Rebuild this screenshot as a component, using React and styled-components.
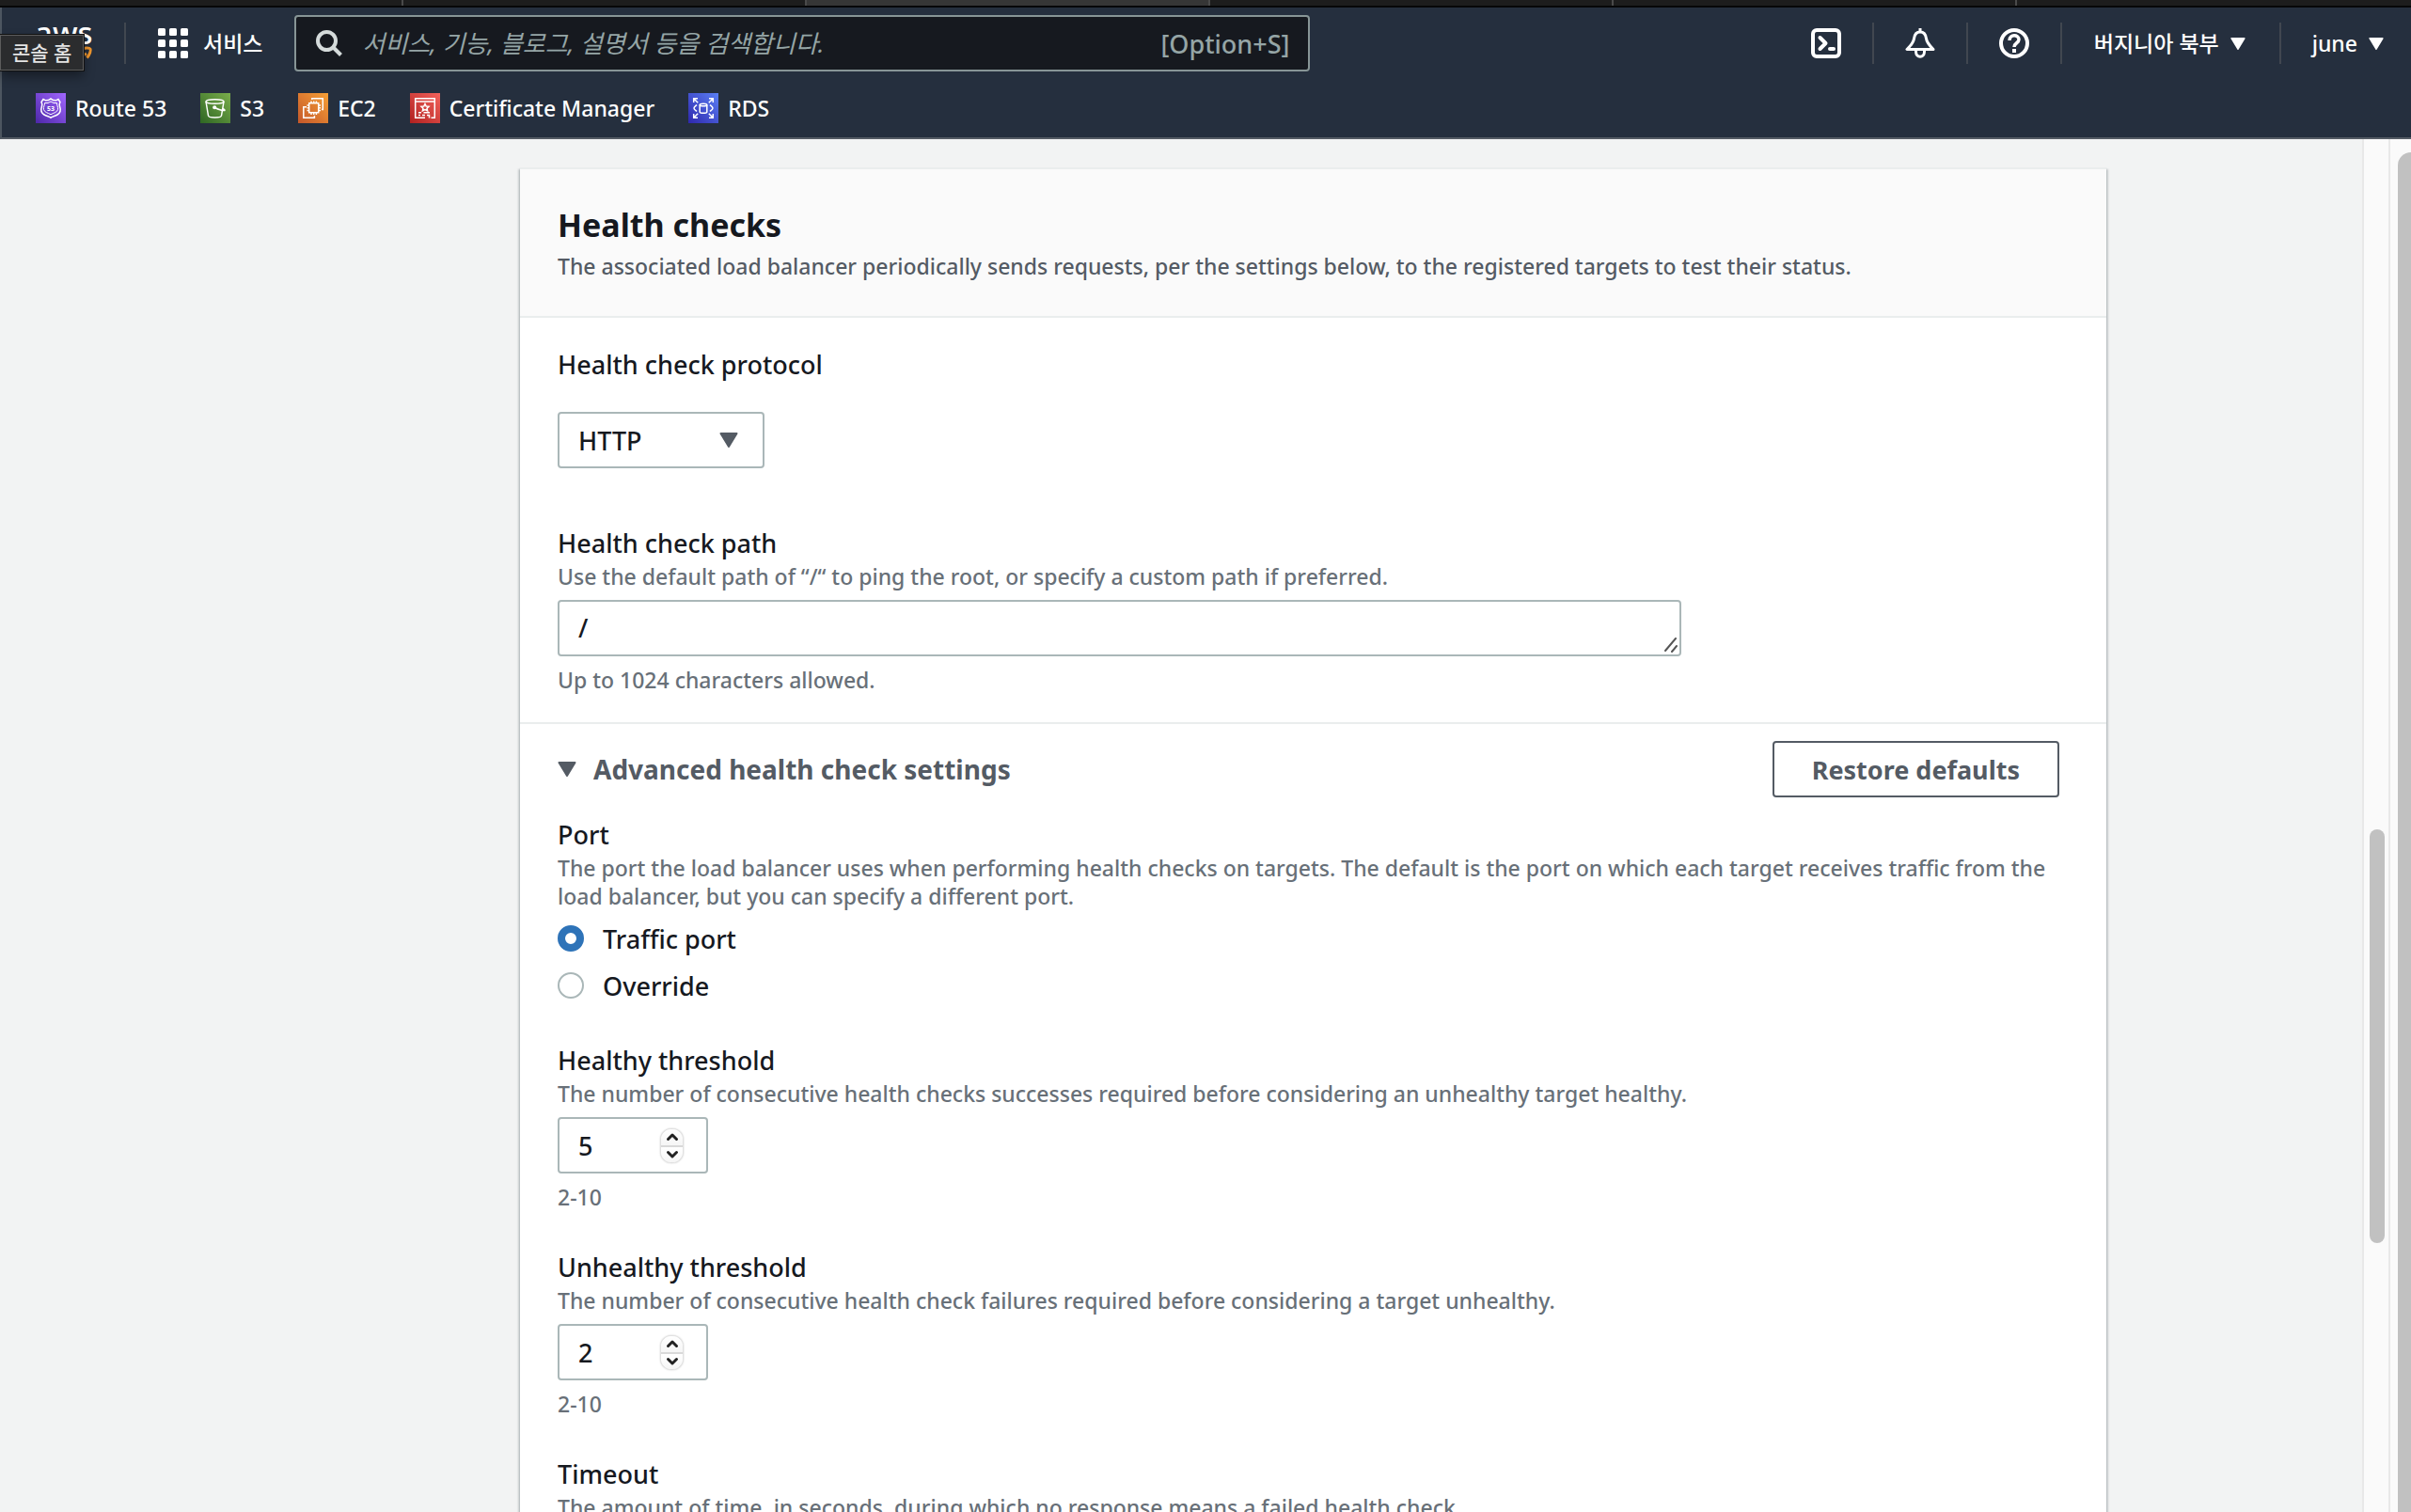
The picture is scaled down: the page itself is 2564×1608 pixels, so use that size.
import React, { useState } from 'react';
import styled, { createGlobalStyle } from 'styled-components';

//styled-components
const GlobalStyle = createGlobalStyle`
    * {
        box-sizing: border-box;
    }
    body {
        margin: 0;
        background: #f2f3f3;
        color: #16191f;
        font-family: "Noto Sans", "Noto Sans CJK KR", sans-serif;
        font-size: 27px;
        font-weight: 500;
    }
    button, input, select, textarea {
        font: inherit;
        color: inherit;
    }
    h1, h2, p {
        margin: 0;
    }
`;

const Shell = styled.div`
    display: flex;
    flex-direction: column;
    height: 100vh;
    overflow: hidden;
`;

//top of the page
const TabStrip = styled.div`
    display: grid;
    grid-template-columns: repeat(5, 429px) 1fr;
    flex: none;
    height: 8px;
    background: #1d1d1d;
    border-bottom: 2px solid #060708;
`;
const Tab = styled.div`
    border-right: 2px solid #4a4a4a;
    background: ${props => (props.$active ? '#363636' : 'transparent')};

    &:last-child {
        border-right: none;
    }
`;
const Header = styled.header`
    flex: none;
    background: #252f3e;
    color: #fff;
    border-left: 2px solid #4d5660;
    border-bottom: 2px solid #545b64;
`;
const TopBar = styled.div`
    display: flex;
    align-items: center;
    height: 76px;
`;
const HomeLink = styled.a`
    position: relative;
    display: flex;
    flex-direction: column;
    justify-content: center;
    width: 130px;
    height: 52px;
    padding-left: 35px;
    color: #fff;
    font-size: 33px;
    line-height: 28px;
    text-decoration: none;
`;
const Tooltip = styled.span`
    position: absolute;
    top: 17px;
    left: -2px;
    padding: 4px 12px;
    border: 1px solid #5c5c5c;
    outline: 1px solid #111;
    background: #2b2c2e;
    box-shadow: 0 6px 12px rgba(0, 0, 0, 0.4);
    color: #e4e4e4;
    font-size: 21px;
    line-height: 28px;
    white-space: nowrap;
`;
const Divider = styled.span`
    width: 2px;
    height: 44px;
    background: #414750;
`;
const MenuButton = styled.button`
    display: flex;
    align-items: center;
    gap: ${props => props.$gap || '12px'};
    padding: ${props => props.$pad || '0 33px'};
    border: none;
    background: none;
    color: #fff;
    font-size: 23px;
    line-height: 32px;
    white-space: nowrap;
`;
const SearchBox = styled.label`
    display: flex;
    align-items: center;
    flex: 0 1 1080px;
    height: 60px;
    padding: 0 20px;
    border: 2px solid #879596;
    border-radius: 4px;
    background: #16191f;
    color: #95a5a6;
`;
const SearchInput = styled.input`
    flex: 1;
    min-width: 0;
    margin-left: 20px;
    padding: 0;
    border: none;
    outline: none;
    background: none;
    font-size: 26px;

    &::placeholder {
        color: #95a5a6;
        font-style: italic;
        font-weight: 400;
        opacity: 1;
    }
`;
const Tools = styled.div`
    display: flex;
    align-items: center;
    margin-left: auto;
`;
const Favorites = styled.nav`
    display: flex;
    align-items: center;
    gap: 36px;
    height: 62px;
    padding: 0 36px 0;
`;
const FavoriteLink = styled.a`
    display: flex;
    align-items: center;
    gap: 10px;
    color: #fff;
    font-size: 23px;
    line-height: 32px;
    text-decoration: none;
`;
const Tile = styled.svg`
    width: 32px;
    height: 32px;
    background: linear-gradient(45deg, ${props => props.$from}, ${props => props.$to});
    fill: none;
    stroke: #fff;
    stroke-width: 1.5;
`;

//main area
const Body = styled.div`
    display: flex;
    flex: 1;
    min-height: 0;
`;
const Main = styled.main`
    flex: 1;
    min-width: 0;
    padding: 30px 272px 0 553px;
    overflow: hidden;
`;
const Card = styled.form`
    border-top: 2px solid #eaeded;
    background: #fff;
    box-shadow: 0 2px 2px rgba(0, 28, 36, 0.3), 2px 2px 2px rgba(0, 28, 36, 0.15), -2px 2px 2px rgba(0, 28, 36, 0.15);
`;
const CardHeader = styled.div`
    padding: 37px 40px 38px;
    background: #fafafa;
    border-bottom: 2px solid #eaeded;
`;
const Title = styled.h1`
    font-size: 34px;
    font-weight: 700;
    line-height: 44px;
`;
const Description = styled.p`
    color: ${props => (props.$dark ? '#545b64' : '#687078')};
    font-size: 23px;
    line-height: 30px;
`;
const TitleDescription = styled(Description)`
    margin-top: 7px;
`;
const Section = styled.div`
    display: flex;
    flex-direction: column;
    gap: ${props => props.$gap};
    padding: ${props => props.$pad};

    & + & {
        border-top: 2px solid #eaeded;
    }
`;
const Field = styled.div`
    display: flex;
    flex-direction: column;
    align-items: flex-start;
    gap: 10px;
`;
const FieldSet = styled.fieldset`
    display: flex;
    flex-direction: column;
    gap: 10px;
    min-width: 0;
    margin: 0;
    padding: 0;
    border: none;
`;
const Label = styled.label`
    display: block;
    line-height: 40px;
`;
const Legend = styled.legend`
    padding: 0;
    line-height: 40px;
`;
const ControlBox = styled.div`
    position: relative;
    width: ${props => props.$width};
    max-width: 100%;
    height: 60px;
    margin-top: ${props => props.$top || '0'};
`;
const controlStyle = `
    display: block;
    width: 100%;
    height: 60px;
    margin: 0;
    border: 2px solid #aab7b8;
    border-radius: 4px;
    background: #fff;
    outline: none;
    appearance: none;
`;
const Select = styled.select`
    ${controlStyle}
    padding: 0 20px;
`;
const TextArea = styled.textarea`
    ${controlStyle}
    padding: 8px 20px;
    line-height: 40px;
    overflow: hidden;
    resize: none;
`;
const NumberInput = styled.input`
    ${controlStyle}
    padding: 0 20px;
    appearance: textfield;

    &::-webkit-inner-spin-button {
        display: none;
    }
`;
const SelectArrow = styled.svg`
    position: absolute;
    top: 22px;
    right: 28px;
    pointer-events: none;
`;
const ResizeGrip = styled.svg`
    position: absolute;
    right: 4px;
    bottom: 4px;
    pointer-events: none;
`;
const Stepper = styled.div`
    position: absolute;
    top: 12px;
    right: 26px;
    display: flex;
    flex-direction: column;
    width: 25px;
    height: 37px;
    border: 1px solid #e0e0e0;
    border-radius: 12px;
    box-shadow: 0 0 2px rgba(0, 0, 0, 0.2);
    background: #fff;
    overflow: hidden;
`;
const StepButton = styled.button`
    display: flex;
    flex: 1;
    align-items: center;
    justify-content: center;
    padding: 0;
    border: none;
    background: linear-gradient(#fff, #f6f6f6);

    & + & {
        border-top: 2px solid #d9d9d9;
    }
`;
const AdvancedRow = styled.div`
    display: flex;
    align-items: center;
    justify-content: space-between;
`;
const Expander = styled.button`
    display: flex;
    align-items: center;
    gap: 18px;
    padding: 0;
    border: none;
    background: none;
    color: #545b64;
    font-size: 28px;
    font-weight: 700;
    line-height: 40px;
`;
const OutlineButton = styled.button`
    height: 60px;
    padding: 0 40px;
    border: 2px solid #545b64;
    border-radius: 4px;
    background: #fff;
    color: #545b64;
    font-weight: 700;
`;
const RadioLabel = styled.label`
    display: flex;
    align-items: center;
    gap: 20px;
    height: 40px;
`;
const Radio = styled.input`
    appearance: none;
    width: 28px;
    height: 28px;
    margin: 0;
    border: 2px solid #aab7b8;
    border-radius: 50%;
    background: #fff;

    &:checked {
        border: 8px solid #2e73b8;
    }
`;

//scroll bars
const InnerTrack = styled.div`
    flex: none;
    width: 30px;
    padding: 734px 4px 0 6px;
    background: #fafafa;
    border-left: 2px solid #e8e8e8;
    border-right: 2px solid #e8e8e8;
`;
const OuterTrack = styled.div`
    flex: none;
    width: 22px;
    padding: 14px 0 0 8px;
    background: #fafafa;
`;
const Thumb = styled.div`
    height: ${props => props.$height};
    border-radius: ${props => props.$radius};
    background: #c1c1c1;
`;

const Triangle = ({ width, height }) => (
    <svg width={width} height={height} viewBox="0 0 20 16" preserveAspectRatio="none" aria-hidden="true">
        <path d="M1.5 1h17L10 15z" fill="currentColor" stroke="currentColor" strokeWidth="2" strokeLinejoin="round" />
    </svg>
);

const Chevron = ({ d }) => (
    <svg width="14" height="10" viewBox="0 0 14 10" fill="none" stroke="#222" strokeWidth="3" strokeLinecap="round" strokeLinejoin="round" aria-hidden="true">
        <path d={d} />
    </svg>
);

const Route53Icon = () => (
    <Tile viewBox="0 0 32 32" $from="#4d27a8" $to="#a166ff" aria-hidden="true">
        <path d="M8 6.500l2.500 1.300 3-.2L16 6l2.500 1.600 3 .2L24 6.500l2 3c-.6 1.300-1.300 2.500-.5 4.500 1.200 3.300.8 7-2.500 9-2.500 1.500-5 1.700-7 3.200-2-1.500-4.500-1.700-7-3.200-3.300-2-3.700-5.700-2.500-9 .8-2 .1-3.200-.5-4.500z" />
        <path d="M9.500 10.500h3.500l3-1.500 3 1.500h3.500c-.3 2.500 1.700 4 1 7-.7 3-4.500 3.500-7.500 5.300-3-1.800-6.800-2.300-7.500-5.300-.7-3 1.300-4.500 1-7z" strokeWidth="1" />
        <text x="16" y="19" fill="#fff" stroke="none" fontSize="7" fontWeight="700" textAnchor="middle">53</text>
    </Tile>
);
const S3Icon = () => (
    <Tile viewBox="0 0 32 32" $from="#2e6623" $to="#7aad4b" aria-hidden="true">
        <ellipse cx="15.500" cy="9" rx="9.500" ry="2.300" />
        <path d="M6 9l2.500 15c.2 2.500 13.800 2.500 14 0L25 9" />
        <path d="M15.500 15.500c3 1.500 7.500 3.500 10.300 3 .8-.4-.6-1.400-2.300-2" />
        <circle cx="15.200" cy="15.300" r="1.300" fill="#fff" />
    </Tile>
);
const Ec2Icon = () => (
    <Tile viewBox="0 0 32 32" $from="#c4572a" $to="#f7a036" aria-hidden="true">
        <rect x="11.700" y="10.700" width="10" height="10" />
        <path d="M14 10.500V8.500M16.700 10.500V8.500M19.400 10.500V8.500M14 23v-2M16.700 23v-2M19.400 23v-2M11.500 13H9.500M11.500 15.700H9.500M11.500 18.400H9.500M24 13h-2M24 15.700h-2M24 18.400h-2" />
        <path d="M14.700 7V5.800h11.600v11.600H25M9 14.700H5.800v11.600h11.600V24" />
    </Tile>
);
const CertificateIcon = () => (
    <Tile viewBox="0 0 32 32" $from="#b0201f" $to="#f4635c" aria-hidden="true">
        <path d="M16 26.300H5.700V5.700h20.600v20.600H22.500M5.700 9h20.600" />
        <path d="M16 11.500l1.200 2.500 2.800.3-2 1.900.6 2.700-2.600-1.300-2.600 1.300.6-2.700-2-1.900 2.800-.3z" />
        <path d="M9 20.700h3M14.500 20.700h6.500M9 23.500h2M13 23.500h3M18 23.500h2.500v3" />
    </Tile>
);
const RdsIcon = () => (
    <Tile viewBox="0 0 32 32" $from="#2e27ad" $to="#5b80f5" aria-hidden="true">
        <path d="M5.700 10V5.700H10M5.700 5.700l4.500 4.500M22 5.700h4.300V10M26.300 5.700l-4.500 4.500M5.700 22v4.300H10M5.700 26.300l4.500-4.500M22 26.300h4.300V22M26.300 26.300l-4.500-4.500" />
        <ellipse cx="16" cy="12.500" rx="3.800" ry="1.300" />
        <path d="M12.200 12.500v7.500c0 1.800 7.600 1.800 7.600 0v-7.500" />
        <path d="M9 12.500c-1 1-3 1.800-3 3.500s2 2.500 3 3.500M23 12.500c1 1 3 1.800 3 3.500s-2 2.500-3 3.500" />
    </Tile>
);

const favorites = [
    { name: 'Route 53', Icon: Route53Icon },
    { name: 'S3', Icon: S3Icon },
    { name: 'EC2', Icon: Ec2Icon },
    { name: 'Certificate Manager', Icon: CertificateIcon },
    { name: 'RDS', Icon: RdsIcon },
];

const NumberField = ({ id, label, description, hint, initial }) => {
    const [value, setValue] = useState(initial);

    return (
        <Field>
            <div>
                <Label htmlFor={id}>{label}</Label>
                <Description>{description}</Description>
            </div>
            <ControlBox $width="160px">
                <NumberInput id={id} type="number" value={value} onChange={e => setValue(Number(e.target.value))} />
                <Stepper>
                    <StepButton type="button" aria-label={`Increase ${label}`} onClick={() => setValue(value + 1)}>
                        <Chevron d="M2.500 7.500L7 3l4.500 4.500" />
                    </StepButton>
                    <StepButton type="button" aria-label={`Decrease ${label}`} onClick={() => setValue(value - 1)}>
                        <Chevron d="M2.500 2.500L7 7l4.500-4.500" />
                    </StepButton>
                </Stepper>
            </ControlBox>
            <Description>{hint}</Description>
        </Field>
    )
}

const ConsoleHeader = () => {
    return (
        <Header>
            <TopBar>
                <HomeLink href="#home">
                    aws
                    <svg width="62" height="22" viewBox="0 0 62 22" fill="none" stroke="#f2982f" strokeWidth="3" aria-hidden="true">
                        <path d="M2 5c16 11 38 12 53 3" />
                        <path d="M48 3.500c5-2 10-2 11-.5s-.5 6-3.500 9.500" />
                    </svg>
                    <Tooltip role="tooltip">콘솔 홈</Tooltip>
                </HomeLink>
                <Divider />
                <MenuButton type="button" $gap="16px" $pad="0 34px">
                    <svg width="32" height="32" viewBox="0 0 32 32" fill="#fff" aria-hidden="true">
                        {[0, 12, 24].map(y => [0, 12, 24].map(x => (
                            <rect key={`${x}-${y}`} x={x} y={y} width="8" height="8" rx="1.500" />
                        )))}
                    </svg>
                    서비스
                </MenuButton>
                <SearchBox>
                    <svg width="30" height="30" viewBox="0 0 30 30" fill="none" stroke="#d5dbdb" strokeWidth="4" aria-hidden="true">
                        <circle cx="12.500" cy="12.500" r="9.500" />
                        <path d="M19 19l8.500 8.500" />
                    </svg>
                    <SearchInput type="search" aria-label="검색" placeholder="서비스, 기능, 블로그, 설명서 등을 검색합니다." />
                    <span>[Option+S]</span>
                </SearchBox>
                <Tools>
                    <MenuButton type="button" aria-label="CloudShell">
                        <svg width="32" height="32" viewBox="0 0 32 32" fill="none" stroke="#fff" strokeWidth="4" aria-hidden="true">
                            <rect x="2" y="2" width="28" height="28" rx="4" />
                            <path d="M9.500 10l6 6-6 6" strokeLinecap="round" strokeLinejoin="round" />
                            <path d="M20 22h4" strokeLinecap="round" />
                        </svg>
                    </MenuButton>
                    <Divider />
                    <MenuButton type="button" aria-label="Notifications">
                        <svg width="32" height="32" viewBox="0 0 32 32" fill="none" stroke="#fff" strokeWidth="3" strokeLinejoin="round" aria-hidden="true">
                            <path d="M16 4c-4.500 0-6 3-6.500 7C9 15.500 6 18.500 2 22.500h28C26 18.500 23 15.500 22.500 11 22 7 20.500 4 16 4zM16 0v4" />
                            <path d="M11.500 23v2c0 7 9 7 9 0v-2" />
                        </svg>
                    </MenuButton>
                    <Divider />
                    <MenuButton type="button" aria-label="Help">
                        <svg width="32" height="32" viewBox="0 0 32 32" fill="none" stroke="#fff" aria-hidden="true">
                            <circle cx="16" cy="16" r="14" strokeWidth="4" />
                            <path d="M11 13c0-7 10-6.500 10-1 0 4-5 3.500-5 8" strokeWidth="3.500" />
                            <path d="M16 22v4" strokeWidth="4" />
                        </svg>
                    </MenuButton>
                    <Divider />
                    <MenuButton type="button" $pad="0 36px 0 34px">
                        버지니아 북부
                        <Triangle width="16" height="13" />
                    </MenuButton>
                    <Divider />
                    <MenuButton type="button" $pad="0 29px 0 33px">
                        june
                        <Triangle width="16" height="13" />
                    </MenuButton>
                </Tools>
            </TopBar>
            <Favorites>
                {favorites.map(({ name, Icon }) => (
                    <FavoriteLink key={name} href="#service">
                        <Icon />
                        {name}
                    </FavoriteLink>
                ))}
            </Favorites>
        </Header>
    )
}

const App = () => {
    const [port, setPort] = useState('traffic');

    return (
        <Shell>
            <GlobalStyle />
            <TabStrip>
                <Tab />
                <Tab />
                <Tab $active />
                <Tab />
                <Tab />
                <Tab />
            </TabStrip>
            <ConsoleHeader />
            <Body>
                <Main>
                    <Card>
                        <CardHeader>
                            <Title>Health checks</Title>
                            <TitleDescription $dark>
                                The associated load balancer periodically sends requests, per the settings below, to the registered targets to test their status.
                            </TitleDescription>
                        </CardHeader>
                        <Section $gap="60px" $pad="30px 40px">
                            <Field>
                                <Label htmlFor="protocol">Health check protocol</Label>
                                <ControlBox $width="220px" $top="20px">
                                    <Select id="protocol" defaultValue="HTTP">
                                        <option>HTTP</option>
                                        <option>HTTPS</option>
                                    </Select>
                                    <SelectArrow width="20" height="16" viewBox="0 0 20 16" aria-hidden="true">
                                        <path d="M1.500 1h17L10 15z" fill="#545b64" stroke="#545b64" strokeWidth="2" strokeLinejoin="round" />
                                    </SelectArrow>
                                </ControlBox>
                            </Field>
                            <Field>
                                <div>
                                    <Label htmlFor="path">Health check path</Label>
                                    <Description>Use the default path of “/“ to ping the root, or specify a custom path if preferred.</Description>
                                </div>
                                <ControlBox $width="1195px">
                                    <TextArea id="path" rows="1" defaultValue="/" />
                                    <ResizeGrip width="14" height="16" viewBox="0 0 14 16" stroke="#555" strokeWidth="2" strokeLinecap="round" aria-hidden="true">
                                        <path d="M1 14L12 1M8 15l5-6" />
                                    </ResizeGrip>
                                </ControlBox>
                                <Description>Up to 1024 characters allowed.</Description>
                            </Field>
                        </Section>
                        <Section $gap="40px" $pad="18px 50px 40px 40px">
                            <Section $gap="20px" $pad="0">
                                <AdvancedRow>
                                    <Expander type="button" aria-expanded="true">
                                        <Triangle width="20" height="16" />
                                        Advanced health check settings
                                    </Expander>
                                    <OutlineButton type="button">Restore defaults</OutlineButton>
                                </AdvancedRow>
                                <FieldSet>
                                    <Legend>Port</Legend>
                                    <Description>
                                        The port the load balancer uses when performing health checks on targets. The default is the port on which each target receives traffic from the load balancer, but you can specify a different port.
                                    </Description>
                                    <RadioLabel>
                                        <Radio type="radio" name="port" checked={port === 'traffic'} onChange={() => setPort('traffic')} />
                                        Traffic port
                                    </RadioLabel>
                                    <RadioLabel>
                                        <Radio type="radio" name="port" checked={port === 'override'} onChange={() => setPort('override')} />
                                        Override
                                    </RadioLabel>
                                </FieldSet>
                            </Section>
                            <NumberField
                                id="healthy"
                                label="Healthy threshold"
                                description="The number of consecutive health checks successes required before considering an unhealthy target healthy."
                                hint="2-10"
                                initial={5}
                            />
                            <NumberField
                                id="unhealthy"
                                label="Unhealthy threshold"
                                description="The number of consecutive health check failures required before considering a target unhealthy."
                                hint="2-10"
                                initial={2}
                            />
                            <NumberField
                                id="timeout"
                                label="Timeout"
                                description="The amount of time, in seconds, during which no response means a failed health check."
                                hint="2-120"
                                initial={5}
                            />
                        </Section>
                    </Card>
                </Main>
                <InnerTrack>
                    <Thumb $height="440px" $radius="8px" />
                </InnerTrack>
                <OuterTrack>
                    <Thumb $height="100%" $radius="14px 0 0 0" />
                </OuterTrack>
            </Body>
        </Shell>
    )
}

export default App;
